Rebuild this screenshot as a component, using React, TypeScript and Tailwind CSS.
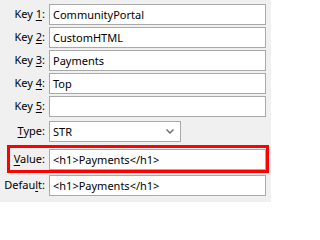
import React from "react";

const font = { fontFamily: '"Noto Sans", Tahoma, sans-serif' };

function Label({ text, hot, className = "" }: { text: string; hot: number; className?: string }) {
  return (
    <span className={`shrink-0 text-right pr-[4px] ${className}`}>
      {text.slice(0, hot)}
      <span className="underline underline-offset-[2px] decoration-[1px]">{text[hot]}</span>
      {text.slice(hot + 1)}
    </span>
  );
}

function TextBox({ value }: { value: string }) {
  return (
    <div className="h-[21px] w-[217px] border border-[#a9a9a9] bg-white pl-[3px] flex items-center leading-none">
      {value}
    </div>
  );
}

const keys = ["CommunityPortal", "CustomHTML", "Payments", "Top", ""];

export default function App() {
  return (
    <div className="w-[271px] h-[202px] bg-[#f0f0f0] text-[11px] text-black pt-[4px]" style={font}>
      <div className="flex flex-col gap-[2px]">
        {keys.map((k, i) => (
          <div key={i} className="flex items-center">
            <Label text={`Key ${i + 1}:`} hot={4} className="w-[49px]" />
            <TextBox value={k} />
          </div>
        ))}
      </div>

      <div className="flex items-center mt-[4px]">
        <Label text="Type:" hot={0} className="w-[49px]" />
        <div className="h-[21px] w-[132px] border border-[#a9a9a9] bg-white pl-[3px] pr-[5px] flex items-center justify-between leading-none">
          <span>STR</span>
          <svg width="8" height="5" viewBox="0 0 8 5" className="mr-[1px]">
            <path d="M0.5 0.5 L4 4 L7.5 0.5" fill="none" stroke="#6b6b6b" strokeWidth="1.4" />
          </svg>
        </div>
      </div>

      <div className="ml-[7px] mt-[3px] w-[262px] h-[28px] border-[3px] border-[#ff0000] flex items-center">
        <Label text="Value:" hot={0} className="w-[39px]" />
        <TextBox value="<h1>Payments</h1>" />
      </div>

      <div className="flex items-center mt-[2px]">
        <Label text="Default:" hot={5} className="w-[49px]" />
        <TextBox value="<h1>Payments</h1>" />
      </div>
    </div>
  );
}
